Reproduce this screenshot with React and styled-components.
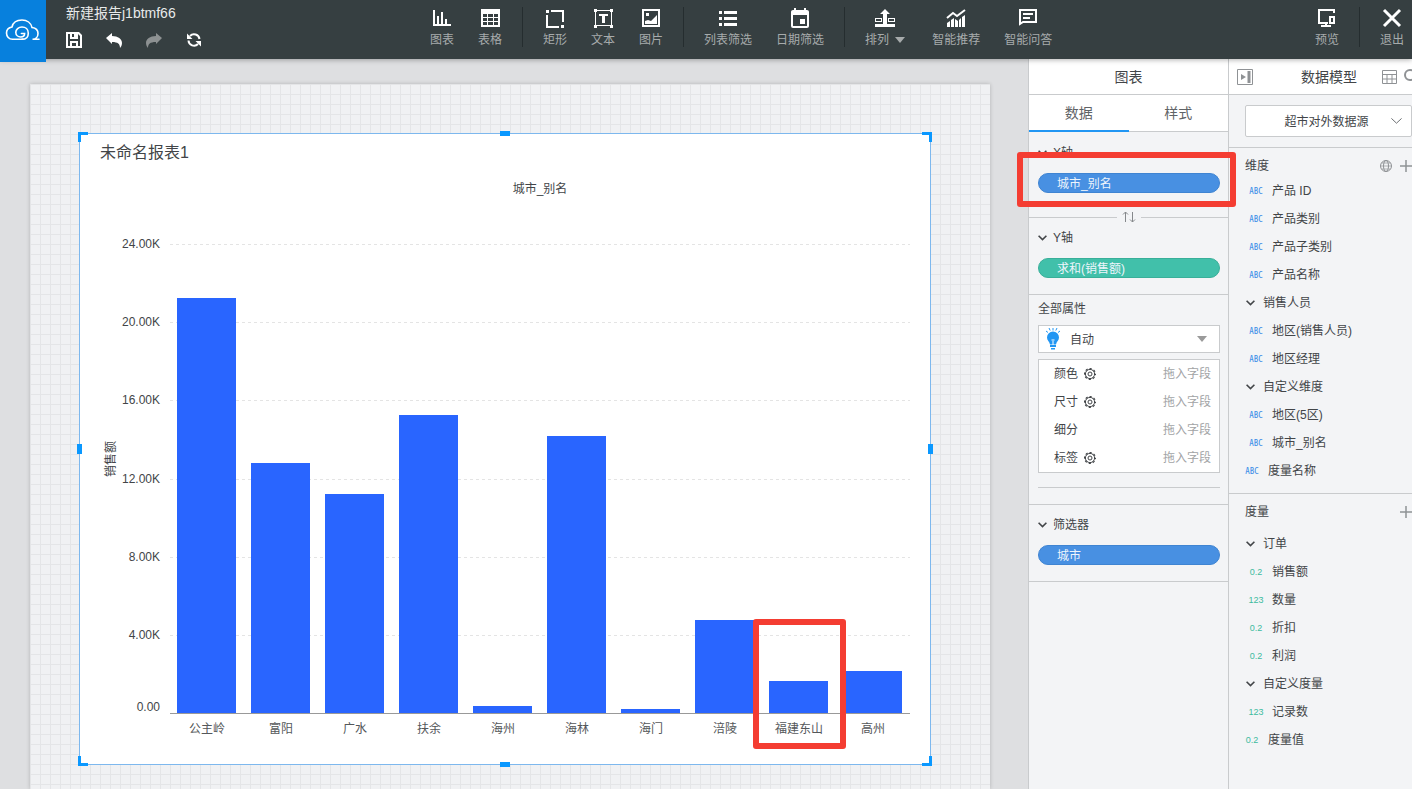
import React from "react";
import styled, { createGlobalStyle, css } from "styled-components";

const line = "#c9cbcd";

const Global = createGlobalStyle`
  * { box-sizing: border-box; }
  body {
    margin: 0;
    overflow: hidden;
    font: 12px/20px "Liberation Sans", "Noto Sans CJK SC", sans-serif;
    color: #424548;
  }
  button, select {
    font: inherit;
    color: inherit;
    margin: 0;
    padding: 0;
    border: 0;
    background: none;
    cursor: pointer;
  }
  svg { display: block; flex: none; }
  h1, h2, h3, ul { margin: 0; padding: 0; font-weight: normal; list-style: none; }
`;

const Page = styled.div`
  height: 100vh;
  display: flex;
  flex-direction: column;
`;

/* ---------- top bar ---------- */

const TopBar = styled.header`
  position: relative;
  z-index: 3;
  flex: none;
  display: flex;
  height: 59px;
  background: #363f41;
  color: #fff;
  box-shadow: 0 1px 5px rgba(0, 0, 0, 0.3);
`;

const Logo = styled.a`
  flex: none;
  display: flex;
  justify-content: center;
  width: 46px;
  height: 62px;
  padding-top: 15px;
  background: #0780dd;
`;

const ReportInfo = styled.div`
  flex: 0 0 372px;
  padding: 3px 0 0 20px;
`;

const ReportTitle = styled.h1`
  font-size: 14px;
  line-height: 20px;
  color: #e8eaea;
`;

const Quick = styled.div`
  display: flex;
  gap: 24px;
  margin-top: 9px;
`;

const QuickButton = styled.button`
  width: 16px;
  height: 16px;
  color: ${(p) => (p.disabled ? "#8d9192" : "#fff")};
`;

const Tools = styled.nav`
  display: flex;
  flex: none;
`;

const RightTools = styled(Tools)`
  margin-left: auto;
`;

const Tool = styled.button`
  display: flex;
  flex-direction: column;
  align-items: center;
  padding: 8px ${(p) => p.$end || 12}px 0 12px;
  color: #fff;
`;

const ToolLabel = styled.span`
  display: flex;
  align-items: center;
  gap: 6px;
  margin-top: 2px;
  color: #a7abac;
  white-space: nowrap;
`;

const Separator = styled.i`
  width: 1px;
  height: 40px;
  margin: 7px 8px 0;
  background: #252d2f;
`;

/* ---------- canvas ---------- */

const Main = styled.main`
  flex: 1;
  min-height: 0;
  display: flex;
`;

const Stage = styled.section`
  flex: 1;
  min-width: 0;
  display: flex;
  padding: 25px 38px 0 30px;
  background: #dedfe1;
  overflow: hidden;
`;

const Sheet = styled.div`
  flex: 1;
  min-width: 0;
  padding: 49px 59px 24px 49px;
  background-color: #f0f1f3;
  background-image: linear-gradient(to right, #e4e5e7 1px, transparent 1px),
    linear-gradient(to bottom, #e4e5e7 1px, transparent 1px);
  background-size: 10px 10px;
  box-shadow: 0 0 4px rgba(0, 0, 0, 0.2);
`;

const Report = styled.article`
  position: relative;
  display: flex;
  flex-direction: column;
  padding: 9px 20px 16px;
  border: 1px solid #7db8ee;
  background: #fff;
`;

const ReportName = styled.h2`
  font-size: 16px;
  line-height: 20px;
`;

const Handle = styled.i`
  position: absolute;
  ${(p) => p.$side === "top" && css`top: -3px; left: calc(50% - 5px); width: 10px; height: 5px;`}
  ${(p) => p.$side === "bottom" && css`bottom: -3px; left: calc(50% - 5px); width: 10px; height: 5px;`}
  ${(p) => p.$side === "left" && css`left: -3px; top: calc(50% - 5px); width: 5px; height: 10px;`}
  ${(p) => p.$side === "right" && css`right: -3px; top: calc(50% - 5px); width: 5px; height: 10px;`}
  background: #0a98ff;
`;

const Corner = styled.i`
  position: absolute;
  width: 10px;
  height: 10px;
  border: 0 solid #0a98ff;
  ${(p) => p.$v}: -2px;
  ${(p) => p.$h}: -2px;
  border-${(p) => p.$v}-width: 3px;
  border-${(p) => p.$h}-width: 3px;
`;

const ChartGrid = styled.div`
  display: grid;
  grid-template-columns: 22px 38px 1fr;
  grid-template-rows: 65px 470px 34px;
  padding-top: 16px;
`;

const SeriesName = styled.h3`
  grid-column: 3;
  margin-left: 10px;
  font-size: 12px;
  text-align: center;
`;

const AxisTitle = styled.span`
  grid-column: 1;
  grid-row: 2;
  place-self: center;
  padding-top: 40px;
  writing-mode: vertical-rl;
  text-orientation: sideways;
  transform: rotate(180deg);
`;

const YLabels = styled.ul`
  grid-column: 2;
  grid-row: 2;
  display: flex;
  flex-direction: column;
  margin: -10px 0 -3px;
  text-align: right;

  li { flex: 1; }
  li:last-child { flex: none; margin-top: -6px; }
`;

const Plot = styled.div`
  grid-column: 3;
  grid-row: 2;
  display: grid;
  margin-left: 10px;
  border-bottom: 1px solid #999;
`;

const GridLines = styled.div`
  grid-area: 1 / 1;
  display: flex;
  flex-direction: column;
`;

const GridLine = styled.i`
  flex: 1;
  background: repeating-linear-gradient(to right, #e4e4e4 0 3px, transparent 3px 6px) top left / 100% 1px no-repeat;
`;

const Bars = styled.div`
  grid-area: 1 / 1;
  position: relative;
  display: flex;
`;

const Slot = styled.div`
  position: relative;
  flex: 1;
  display: flex;
  align-items: flex-end;
  justify-content: center;
  padding-right: 1px;
`;

const Bar = styled.i`
  width: 59px;
  background: #2965ff;
`;

const XLabels = styled.ul`
  grid-column: 3;
  display: flex;
  margin-left: 10px;
  padding-top: 5px;
  color: #54575a;

  li { flex: 1; text-align: center; white-space: nowrap; }
`;

const Highlight = styled.i`
  position: absolute;
  z-index: 2;
  border: 6px solid #f43d32;
  border-radius: 3px;
  pointer-events: none;
`;

const BarHighlight = styled(Highlight)`
  left: -9px;
  right: -10px;
  bottom: -36px;
  height: 130px;
`;

const ChipHighlight = styled(Highlight)`
  inset: -21px -16px -14px -21px;
`;

/* ---------- side panels ---------- */

const ChartPanel = styled.aside`
  position: relative;
  z-index: 2;
  flex: 0 0 200px;
  border-left: 1px solid ${line};
  background: #f3f4f6;
`;

const ModelPanel = styled.aside`
  flex: 0 0 184px;
  border-left: 1px solid ${line};
  background: #f3f4f6;
  overflow: hidden;
`;

const ModelBody = styled.div`
  width: 200px;
`;

const PanelHead = styled.div`
  display: grid;
  grid-template-columns: 1fr auto 1fr;
  align-items: center;
  height: 36px;
  padding: 0 8px;
  border-bottom: 1px solid ${line};
  background: #fff;
  font-size: 14px;

  h2 { grid-column: 2; font-size: 14px; }
`;

const HeadActions = styled.span`
  display: flex;
  justify-content: flex-end;
  gap: 7px;
  padding-right: 1px;
  color: #8f9295;
`;

const IconButton = styled.button`
  display: grid;
  place-items: center;
  width: 16px;
  height: 16px;
  color: #8f9295;
`;

const Tabs = styled.div`
  display: flex;
  height: 37px;
  background: #fff;
`;

const Tab = styled.button`
  flex: 1;
  border-bottom: ${(p) => (p.$active ? "2px solid #2196f3" : `1px solid ${line}`)};
  font-size: 14px;
  color: #5f6366;
`;

const Section = styled.section`
  padding: ${(p) => p.$top}px 8px ${(p) => p.$bottom}px 9px;
  border-bottom: ${(p) => (p.$open ? "0" : `1px solid ${line}`)};
`;

const SectionTitle = styled.h3`
  display: flex;
  align-items: center;
  gap: 6px;
  height: 20px;
  font-size: 12px;
`;

const ChipBox = styled.div`
  position: relative;
  margin-top: 10px;
`;

const Chip = styled.button`
  display: block;
  width: 100%;
  height: 20px;
  padding: 2px 18px 0;
  border: 1px solid ${(p) => (p.$green ? "#39af99" : "#3f84d2")};
  border-radius: 10px;
  background: ${(p) => (p.$green ? "#41c0aa" : "#4890e2")};
  color: #eef5fc;
  line-height: 16px;
  text-align: left;
`;

const SwapRow = styled.div`
  display: flex;
  align-items: center;
  gap: 4px;
  height: 16px;
  margin: -8px 0;
  color: #85888b;

  &::before, &::after { content: ""; flex: 1; height: 1px; background: ${line}; }
`;

const Pick = styled.label`
  display: grid;
  align-items: center;
  height: ${(p) => p.$height}px;
  margin-top: ${(p) => p.$gap || 0}px;
  border: 1px solid ${line};
  border-radius: ${(p) => p.$radius || 0}px;
  background: #fff;

  > * { grid-area: 1 / 1; }
`;

const Select = styled.select`
  appearance: none;
  width: 100%;
  height: 100%;
  padding: ${(p) => (p.$centered ? "2px 4px 0 0" : "2px 0 0 31px")};
  text-align-last: ${(p) => (p.$centered ? "center" : "left")};
`;

const EndSlot = styled.span`
  justify-self: end;
  margin-right: ${(p) => p.$inset}px;
  color: ${(p) => p.$color};
  pointer-events: none;
`;

const StartSlot = styled.span`
  justify-self: start;
  margin-left: 7px;
  pointer-events: none;
`;

const Props = styled.ul`
  margin-top: 6px;
  border: 1px solid ${line};
  background: #fff;
`;

const PropRow = styled.li`
  display: flex;
  align-items: center;
  gap: 6px;
  height: 28px;
  padding: 0 8px 0 15px;

  em { margin-left: auto; font-style: normal; color: #a2a4a6; }
`;

const Rule = styled.hr`
  height: 1px;
  margin: 14px 0 0;
  border: 0;
  background: ${line};
`;

const Source = styled.div`
  padding: 10px 17px 10px 16px;
  border-bottom: 1px solid ${line};
`;

const FieldGroup = styled.section`
  padding: 7px 0 8px;
  border-bottom: ${(p) => (p.$last ? "0" : `1px solid ${line}`)};
`;

const GroupHead = styled.div`
  display: flex;
  align-items: center;
  gap: 4px;
  height: 22px;
  margin-bottom: ${(p) => p.$gap || 0}px;
  padding: 0 15px 0 16px;

  h3 { margin-right: auto; font-size: 12px; }
`;

const Field = styled.li`
  display: flex;
  align-items: center;
  height: 28px;
  padding-left: ${(p) => (p.$nested ? 19 : 15)}px;
`;

const Folder = styled(Field)`
  gap: 8px;
  padding-left: 17px;
`;

const Kind = styled.span`
  width: 16px;
  margin-right: 8px;
  font-size: 9px;
  text-align: center;
  color: #3dbb9f;
`;

const TextKind = styled(Kind)`
  font-family: "Noto Sans CJK SC", sans-serif;
  font-feature-settings: "hwid";
  color: #3f8fe8;
`;

/* ---------- icons ---------- */

const Svg = ({ w = 20, h = 20, children, ...rest }) => (
  <svg width={w} height={h} viewBox={`0 0 ${w} ${h}`} fill="none" aria-hidden="true" {...rest}>
    {children}
  </svg>
);

const icons = {
  chart: <path fill="currentColor" d="M1 2h2v14h16v2H1zM5 8h2v8H5zM9 4h2v12H9zM13 11h2v5h-2z" />,
  table: (
    <path fill="currentColor" fillRule="evenodd" d="M1 1h19v18H1zM3 6v3h4V6zM8 6v3h5V6zM14 6v3h4V6zM3 10v3h4v-3zM8 10v3h5v-3zM14 10v3h4v-3zM3 14v3h4v-3zM8 14v3h5v-3zM14 14v3h4v-3z" />
  ),
  rect: <path fill="currentColor" d="M1 2h3v3H1zM6 2h13v12h-2V4H6zM1 7h2v11h11v2H1zM16 17h3v3h-3z" />,
  text: (
    <>
      <path stroke="currentColor" d="M2.500 2.500h16v15h-16z" />
      <path fill="currentColor" d="M1 1h3v3H1zM17 1h3v3h-3zM1 17h3v3H1zM17 17h3v3h-3zM6 6h9v2h-3v7H9V8H6z" />
    </>
  ),
  picture: (
    <>
      <path stroke="currentColor" strokeWidth="2" d="M2 2h16v16H2z" />
      <path fill="currentColor" d="M5 5h3v3H5zM4 15v-2l3-1 3 1 6-6v9H4z" />
    </>
  ),
  list: <path fill="currentColor" d="M1 3h3v3H1zM6 3h13v3H6zM1 9h3v3H1zM6 9h13v3H6zM1 15h3v3H1zM6 15h13v3H6z" />,
  date: (
    <path fill="currentColor" transform="translate(-2 -1)" d="M17 12h-5v5h5v-5zM16 1v2H8V1H6v2H5c-1.110 0-1.990.9-1.990 2L3 19a2 2 0 0 0 2 2h14c1.100 0 2-.9 2-2V5c0-1.100-.9-2-2-2h-1V1h-2zm3 18H5V8h14v11z" />
  ),
  arrange: (
    <path fill="currentColor" fillRule="evenodd" d="M10 1l5 5h-3v10h8v3H0v-3h8V6H5zM0 10h7v4H0zM1 11v2h5v-2zM13 10h7v4h-7zM14 11v2h5v-2z" />
  ),
  suggest: (
    <>
      <path stroke="currentColor" strokeWidth="2" d="M1 10l6-5 4 3 8-6" />
      <path fill="currentColor" d="M1 15l3-2v6H1zM5 12l3-2v9H5zM9 11l3 2v6H9zM13 12l2-2v9h-2zM16 9l3-2v12h-3z" />
    </>
  ),
  chat: (
    <>
      <path stroke="currentColor" strokeWidth="2" d="M2 16V2h16v12H5z" />
      <path stroke="currentColor" strokeWidth="2" d="M5 6h10M5 10h7" />
    </>
  ),
  preview: (
    <>
      <path stroke="currentColor" strokeWidth="2" d="M17 5V2H2v13h9M9 14v4M4 18h10" />
      <path stroke="currentColor" strokeWidth="2" d="M13 9h4v6h-4z" />
    </>
  ),
  exit: <path stroke="currentColor" strokeWidth="3" d="M2 2l16 16M18 2L2 18" />,
};

const Caret = () => (
  <Svg w={10} h={6}><path fill="currentColor" d="M0 0h10L5 6z" /></Svg>
);

const Chevron = () => (
  <Svg w={9} h={6}><path stroke="currentColor" strokeWidth="1.600" d="M.6.7l3.900 3.900L8.400.7" /></Svg>
);

const Gear = () => (
  <Svg w={12} h={12}>
    <circle cx="6" cy="6" r="5.400" stroke="currentColor" strokeWidth="1.200" strokeDasharray="2.200 2.041" strokeDashoffset="1.100" />
    <circle cx="6" cy="6" r="4.600" stroke="currentColor" />
    <circle cx="6" cy="6" r="2" stroke="currentColor" />
  </Svg>
);

const Bulb = () => (
  <Svg w={14} h={22}>
    <path stroke="#2196f3" d="M7 0v2.500M3 0l1.200 2.500M11 0L9.800 2.500M0 3l2 1.500M14 3l-2 1.500" />
    <path fill="#2196f3" d="M7 3.500a6 6 0 0 1 6 6c0 3-2.500 4-3 7H4c-.5-3-3-4-3-7a6 6 0 0 1 6-6zM4 17h6v2H4zM5 20h4v1.500H5z" />
    <path stroke="#fff" d="M7 17v-4M5.500 12h3" />
  </Svg>
);

/* ---------- data ---------- */

const tools = [
  ["chart", "图表"], ["table", "表格"], null,
  ["rect", "矩形"], ["text", "文本"], ["picture", "图片"], null,
  ["list", "列表筛选"], ["date", "日期筛选"], null,
  ["arrange", "排列", true], ["suggest", "智能推荐"], ["chat", "智能问答"],
];

const MAX = 24;
const ticks = ["24.00K", "20.00K", "16.00K", "12.00K", "8.00K", "4.00K", "0.00"];
const cities = [
  ["公主岭", 21.24], ["富阳", 12.8], ["广水", 11.2], ["扶余", 15.25], ["海州", 0.36],
  ["海林", 14.18], ["海门", 0.2], ["涪陵", 4.76], ["福建东山", 1.64, true], ["高州", 2.15],
];

const dimensions = [
  ["ABC", "产品 ID", 1], ["ABC", "产品类别", 1], ["ABC", "产品子类别", 1], ["ABC", "产品名称", 1],
  [null, "销售人员"], ["ABC", "地区(销售人员)", 1], ["ABC", "地区经理", 1],
  [null, "自定义维度"], ["ABC", "地区(5区)", 1], ["ABC", "城市_别名", 1], ["ABC", "度量名称", 0],
];

const measures = [
  [null, "订单"], ["0.2", "销售额", 1], ["123", "数量", 1], ["0.2", "折扣", 1], ["0.2", "利润", 1],
  [null, "自定义度量"], ["123", "记录数", 1], ["0.2", "度量值", 0],
];

/* ---------- parts ---------- */

const ToolButton = ({ icon, label, caret, end }) => (
  <Tool type="button" $end={end}>
    <Svg overflow="visible">{icons[icon]}</Svg>
    <ToolLabel>{label}{caret && <Caret />}</ToolLabel>
  </Tool>
);

const FieldList = ({ items }) => (
  <ul>
    {items.map(([kind, name, nested]) =>
      kind ? (
        <Field key={name} $nested={nested}>
          {kind === "ABC" ? <TextKind>{kind}</TextKind> : <Kind>{kind}</Kind>}
          {name}
        </Field>
      ) : (
        <Folder key={name}><Chevron />{name}</Folder>
      )
    )}
  </ul>
);

const Plus = () => (
  <IconButton type="button" aria-label="添加">
    <Svg w={12} h={12}><path stroke="currentColor" strokeWidth="1.500" d="M6 0v12M0 6h12" /></Svg>
  </IconButton>
);

const Header = () => (
  <TopBar>
    <Logo href="#" aria-label="首页">
      <Svg w={36} h={28}>
        <g stroke="#fff" strokeWidth="1.600" strokeLinecap="round">
          <path d="M18 24.300H7.500C4 24.300 1.500 21.500 1.500 18S4 12.500 7 12C8 7.500 12 5 17 5s9 3 10 7.500c4 .5 6 3 6 6s-2 5.800-5.500 5.800H34" />
          <path d="M17 24.300c4 0 6.300-2.300 6.300-6.100S20.500 12 17 12s-6.200 2.300-6.200 5.300 2.400 4.700 4.800 4.700 4-1.600 4-3.500h-3.200" />
        </g>
      </Svg>
    </Logo>
    <ReportInfo>
      <ReportTitle>新建报告j1btmf66</ReportTitle>
      <Quick>
        <QuickButton type="button" aria-label="保存">
          <Svg w={16} h={16}>
            <path fill="currentColor" fillRule="evenodd" d="M0 0h13l3 3v13H0zM2 2v12h2V9h8v5h2V4l-2-2v5H4V2zM6 2v3h2V2zM6 11v3h4v-3z" />
          </Svg>
        </QuickButton>
        <QuickButton type="button" aria-label="撤销">
          <Svg w={16} h={16}><path fill="currentColor" d="M0 6l6-5v3c6 0 10 3 10 7 0 2-1 4-2 5 0-4-2-6-8-6v2z" /></Svg>
        </QuickButton>
        <QuickButton type="button" aria-label="重做" disabled>
          <Svg w={16} h={16}><path fill="currentColor" d="M16 6l-6-5v3C4 4 0 7 0 11c0 2 1 4 2 5 0-4 2-6 8-6v2z" /></Svg>
        </QuickButton>
        <QuickButton type="button" aria-label="刷新">
          <Svg w={16} h={16}>
            <path stroke="currentColor" strokeWidth="2" d="M13.500 7A5.500 5.500 0 0 0 4 4M2.500 8.500A5.500 5.500 0 0 0 12 12" />
            <path fill="currentColor" d="M1 1.500V7h5.500zM15 14.500V9H9.500z" />
          </Svg>
        </QuickButton>
      </Quick>
    </ReportInfo>
    <Tools aria-label="工具">
      {tools.map((t, i) =>
        t ? <ToolButton key={i} icon={t[0]} label={t[1]} caret={t[2]} end={t[2] ? 15 : 12} /> : <Separator key={i} />
      )}
    </Tools>
    <RightTools aria-label="操作">
      <ToolButton icon="preview" label="预览" />
      <Separator />
      <ToolButton icon="exit" label="退出" end={8} />
    </RightTools>
  </TopBar>
);

const Chart = () => (
  <ChartGrid>
    <SeriesName>城市_别名</SeriesName>
    <AxisTitle>销售额</AxisTitle>
    <YLabels>{ticks.map((t) => <li key={t}>{t}</li>)}</YLabels>
    <Plot>
      <GridLines>{ticks.slice(1).map((t) => <GridLine key={t} />)}</GridLines>
      <Bars>
        {cities.map(([name, value, marked]) => (
          <Slot key={name}>
            <Bar style={{ height: `${(value / MAX) * 100}%` }} />
            {marked && <BarHighlight />}
          </Slot>
        ))}
      </Bars>
    </Plot>
    <XLabels>{cities.map(([name]) => <li key={name}>{name}</li>)}</XLabels>
  </ChartGrid>
);

export default function App() {
  return (
    <Page>
      <Global />
      <Header />
      <Main>
        <Stage>
          <Sheet>
            <Report>
              <ReportName>未命名报表1</ReportName>
              <Chart />
              {["top", "right", "bottom", "left"].map((s) => <Handle key={s} $side={s} />)}
              {["top", "bottom"].map((v) => ["left", "right"].map((h) => <Corner key={v + h} $v={v} $h={h} />))}
            </Report>
          </Sheet>
        </Stage>

        <ChartPanel>
          <PanelHead><h2>图表</h2></PanelHead>
          <Tabs role="tablist">
            <Tab type="button" role="tab" aria-selected="true" $active>数据</Tab>
            <Tab type="button" role="tab" aria-selected="false">样式</Tab>
          </Tabs>
          <Section $top={11} $bottom={24} $open>
            <SectionTitle><Chevron />X轴</SectionTitle>
            <ChipBox><Chip type="button">城市_别名</Chip><ChipHighlight /></ChipBox>
          </Section>
          <SwapRow>
            <Svg w={16} h={12}>
              <path stroke="currentColor" d="M4.500 11V1M2 3.500L4.500 1 7 3.500M11.500 1v10M9 8.500l2.500 2.500L14 8.500" />
            </Svg>
          </SwapRow>
          <Section $top={11} $bottom={16}>
            <SectionTitle><Chevron />Y轴</SectionTitle>
            <ChipBox><Chip type="button" $green>求和(销售额)</Chip></ChipBox>
          </Section>
          <Section $top={4} $bottom={16}>
            <SectionTitle>全部属性</SectionTitle>
            <Pick $height={28} $gap={6}>
              <Select aria-label="图形类型"><option>自动</option></Select>
              <StartSlot><Bulb /></StartSlot>
              <EndSlot $color="#9a9a9a" $inset={12}><Caret /></EndSlot>
            </Pick>
            <Props>
              {[["颜色", true], ["尺寸", true], ["细分", false], ["标签", true]].map(([name, gear]) => (
                <PropRow key={name}>{name}{gear && <Gear />}<em>拖入字段</em></PropRow>
              ))}
            </Props>
            <Rule />
          </Section>
          <Section $top={10} $bottom={16}>
            <SectionTitle><Chevron />筛选器</SectionTitle>
            <ChipBox><Chip type="button">城市</Chip></ChipBox>
          </Section>
        </ChartPanel>

        <ModelPanel>
          <ModelBody>
            <PanelHead>
              <IconButton type="button" aria-label="收起">
                <Svg w={16} h={16}>
                  <path stroke="currentColor" d="M.5.5h15v15H.5z" />
                  <path fill="currentColor" d="M4 5l5 3-5 3zM10.500 2h3v12h-3z" />
                </Svg>
              </IconButton>
              <h2>数据模型</h2>
              <HeadActions>
                <IconButton type="button" aria-label="表格视图">
                  <Svg w={16} h={16}>
                    <path stroke="currentColor" d="M1.500 1.500h14v13h-14zM1.500 5.500h14M1.500 10h14M6 5.500v9M11 5.500v9" />
                  </Svg>
                </IconButton>
                <IconButton type="button" aria-label="搜索">
                  <Svg w={16} h={16}>
                    <circle cx="6" cy="6" r="5" stroke="currentColor" strokeWidth="2" />
                    <path stroke="currentColor" strokeWidth="2" d="M10 10l5 5" />
                  </Svg>
                </IconButton>
              </HeadActions>
            </PanelHead>
            <Source>
              <Pick $height={32} $radius={2}>
                <Select $centered aria-label="数据源"><option>超市对外数据源</option></Select>
                <EndSlot $color="#6d7073" $inset={9}>
                  <Svg w={11} h={6}><path stroke="currentColor" d="M.4.4l5.100 4.800L10.600.4" /></Svg>
                </EndSlot>
              </Pick>
            </Source>
            <FieldGroup>
              <GroupHead>
                <h3>维度</h3>
                <IconButton type="button" aria-label="地理">
                  <Svg w={12} h={12}>
                    <g stroke="currentColor">
                      <circle cx="6" cy="6" r="5.500" />
                      <ellipse cx="6" cy="6" rx="2.500" ry="5.500" />
                      <path d="M.5 6h11M1.500 3h9M1.500 9h9" strokeWidth=".7" />
                    </g>
                  </Svg>
                </IconButton>
                <Plus />
              </GroupHead>
              <FieldList items={dimensions} />
            </FieldGroup>
            <FieldGroup $last>
              <GroupHead $gap={7}><h3>度量</h3><Plus /></GroupHead>
              <FieldList items={measures} />
            </FieldGroup>
          </ModelBody>
        </ModelPanel>
      </Main>
    </Page>
  );
}
